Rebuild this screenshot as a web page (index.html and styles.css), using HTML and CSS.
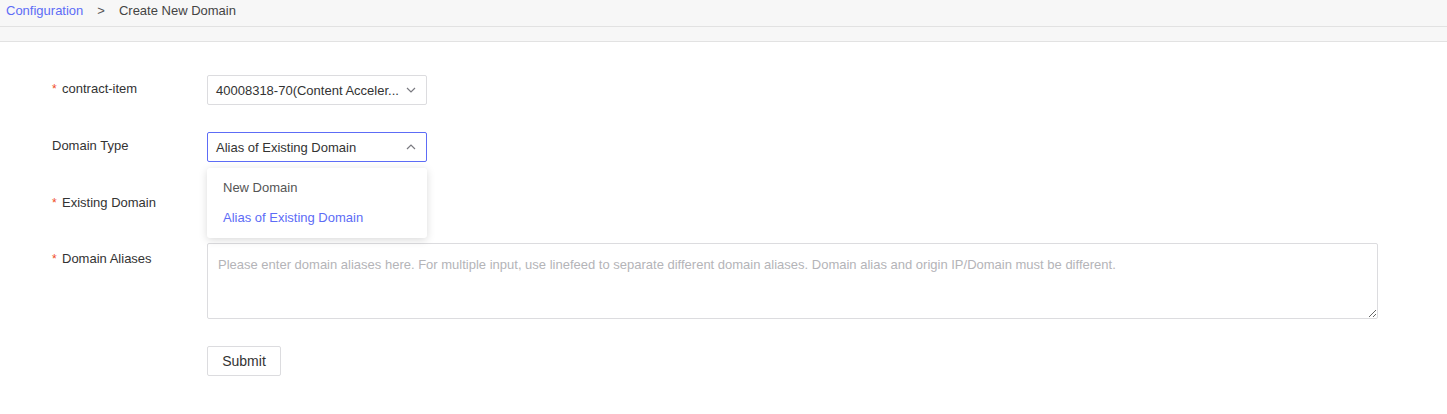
FILE: index.html
```html
<!DOCTYPE html>
<html>
<head>
<meta charset="utf-8">
<link rel="stylesheet" href="styles.css">
</head>
<body>
<div class="topbar">
  <a class="crumb-link">Configuration</a>
  <span class="crumb-sep">&gt;</span>
  <span class="crumb-current">Create New Domain</span>
</div>
<div class="band"></div>
<form class="form">
  <div class="row">
    <label class="label"><span class="req">*</span>contract-item</label>
    <div class="control">
      <div class="select">
        <span class="select-text">40008318-70(Content Acceler...</span>
        <svg class="arrow" width="10" height="6" viewBox="0 0 10 6"><path d="M1 1 L5 5 L9 1" fill="none" stroke="#7a7a80" stroke-width="1.2"/></svg>
      </div>
    </div>
  </div>
  <div class="row">
    <label class="label">Domain Type</label>
    <div class="control dd-wrap">
      <div class="select focused">
        <span class="select-text">Alias of Existing Domain</span>
        <svg class="arrow" width="10" height="6" viewBox="0 0 10 6"><path d="M1 5 L5 1 L9 5" fill="none" stroke="#7a7a80" stroke-width="1.2"/></svg>
      </div>
      <ul class="menu">
        <li class="menu-item">New Domain</li>
        <li class="menu-item active">Alias of Existing Domain</li>
      </ul>
    </div>
  </div>
  <div class="row row-existing">
    <label class="label"><span class="req">*</span>Existing Domain</label>
    <div class="control"><div class="spacer"></div></div>
  </div>
  <div class="row">
    <label class="label label-low"><span class="req">*</span>Domain Aliases</label>
    <div class="control wide">
      <textarea class="textarea" placeholder="Please enter domain aliases here. For multiple input, use linefeed to separate different domain aliases. Domain alias and origin IP/Domain must be different."></textarea>
    </div>
  </div>
  <div class="row">
    <div class="label"></div>
    <div class="control"><button type="button" class="btn">Submit</button></div>
  </div>
</form>
</body>
</html>
```

FILE: styles.css
```css
* { box-sizing: border-box; }
html, body { margin: 0; padding: 0; background: #fff; }
body {
  font-family: "Liberation Sans", Arial, sans-serif;
  font-size: 13px;
  color: #333;
}
.topbar {
  height: 27px;
  background: #f7f7f7;
  border-bottom: 1px solid #e2e2e2;
  display: flex;
  align-items: center;
  padding-left: 6px;
  padding-bottom: 6px;
  font-size: 13px;
}
.crumb-link { color: #5d6cf6; }
.crumb-sep { color: #555; margin: 0 14px 0 14px; }
.crumb-current { color: #444; }
.band {
  height: 15px;
  background: #f7f7f7;
  border-bottom: 1px solid #e2e2e2;
}
.form {
  padding: 33px 0 0 52px;
  display: flex;
  flex-direction: column;
}
.row {
  display: flex;
  align-items: flex-start;
  margin-bottom: 27px;
}
.row-existing { margin-bottom: 24px; }
.label {
  width: 155px;
  flex: none;
  line-height: 30px;
  margin-top: -1px;
  color: #333;
  white-space: nowrap;
}
.label-low { margin-top: 1px; }
.req {
  color: #f04b1e;
  display: inline-block;
  width: 10px;
  font-size: 12px;
}
.control { width: 220px; position: relative; }
.control.wide { width: 1171px; }
.select {
  height: 30px;
  border: 1px solid #dcdcdf;
  border-radius: 2px;
  display: flex;
  align-items: center;
  justify-content: space-between;
  padding: 0 10px 0 8px;
  background: #fff;
}
.select.focused { border-color: #5d6cf6; }
.select-text { color: #333; white-space: nowrap; }
.arrow { flex: none; }
.menu {
  position: absolute;
  left: 0;
  top: 36px;
  width: 220px;
  margin: 0;
  padding: 5px 0;
  list-style: none;
  background: #fff;
  border-radius: 3px;
  box-shadow: 0 2px 8px rgba(0,0,0,0.15);
  z-index: 10;
}
.menu-item {
  height: 30px;
  line-height: 30px;
  padding-left: 16px;
  color: #555;
}
.menu-item.active { color: #5d6cf6; }
.spacer { height: 30px; }
.textarea {
  display: block;
  width: 1171px;
  height: 76px;
  border: 1px solid #dcdcdf;
  border-radius: 2px;
  padding: 13px 10px 7px;
  font-family: inherit;
  font-size: 13px;
  color: #333;
  resize: vertical;
  outline: none;
}
.textarea::placeholder { color: #b4b4b8; }
.btn {
  height: 30px;
  width: 74px;
  background: #fff;
  border: 1px solid #dcdcdf;
  border-radius: 2px;
  font-family: inherit;
  font-size: 14px;
  color: #333;
  padding: 0;
}
```
